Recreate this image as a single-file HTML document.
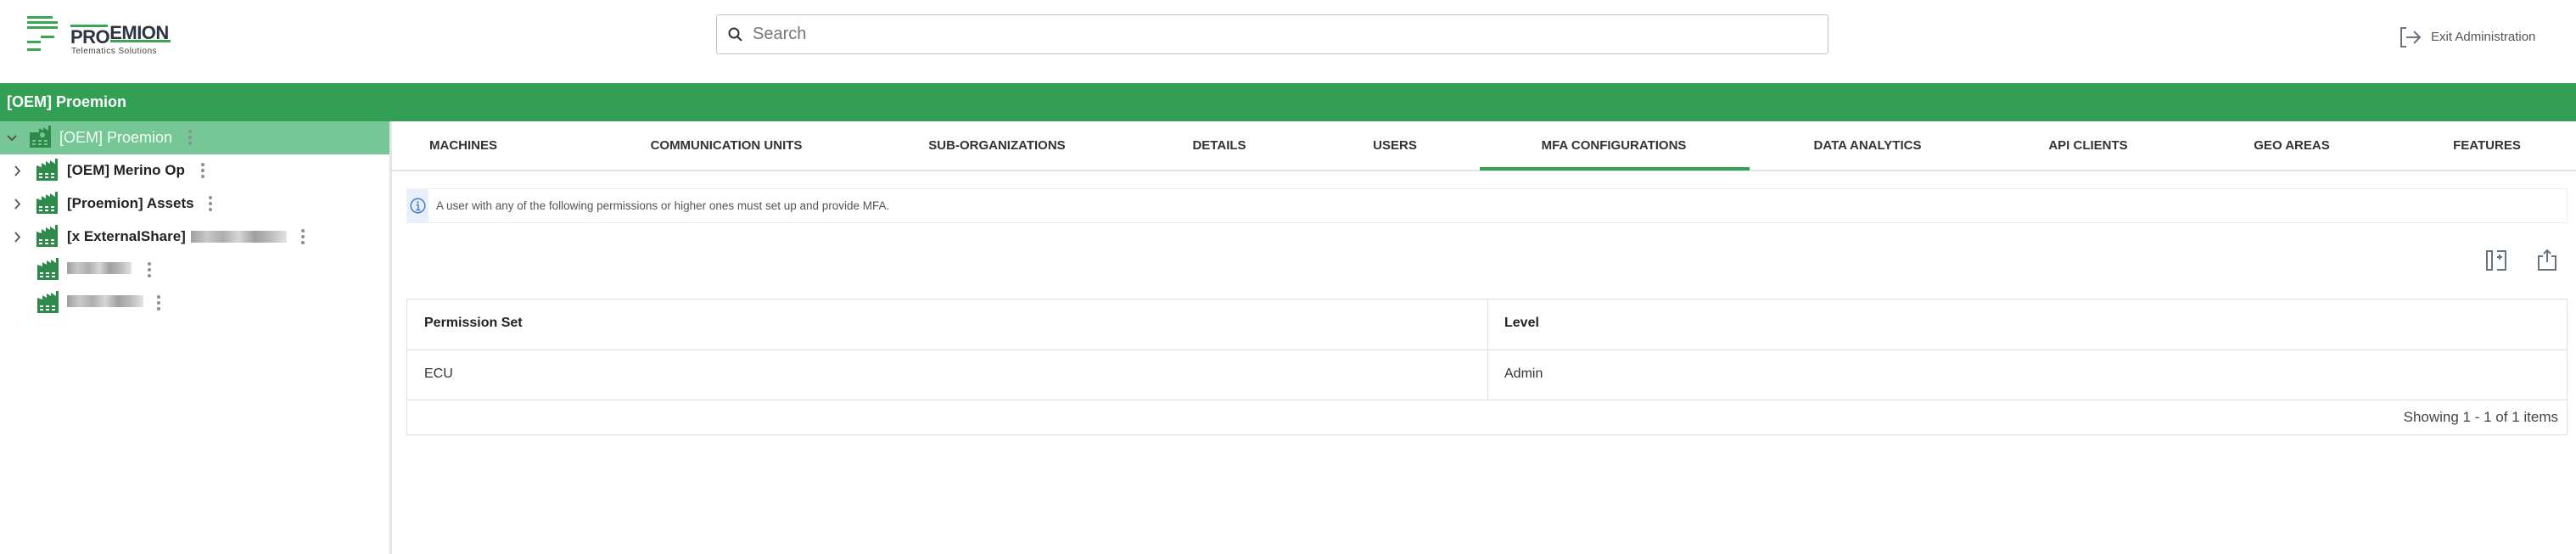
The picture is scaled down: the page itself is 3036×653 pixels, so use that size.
<!DOCTYPE html>
<html><head><meta charset="utf-8"><style>
*{margin:0;padding:0;box-sizing:border-box}
body{width:3036px;height:653px;background:#fff;font-family:"Liberation Sans",sans-serif;position:relative;overflow:hidden;color:#222}
.a{position:absolute;white-space:nowrap}
.tab{position:absolute;top:163px;font-size:15px;font-weight:bold;color:#333;transform:translateX(-50%)}
.row{position:absolute;left:0;height:39px;width:459px}
.row .t{position:absolute;left:79px;top:9px;font-size:17px;font-weight:bold;color:#222}
.dots{position:absolute;width:4px}
.dots i{display:block;width:4px;height:4px;border-radius:2px;background:#8a8f98;margin-bottom:3px}
.blur{position:absolute;height:22px;background:linear-gradient(90deg,#888,#bbb,#999,#ccc,#888,#aaa,#ddd);opacity:.8}
</style></head><body>
<!-- logo -->
<svg class="a" style="left:30px;top:18px" width="40" height="45" viewBox="0 0 40 45">
<g fill="#3aa655"><rect x="2" y="1" width="30" height="3"/><rect x="2" y="7" width="36" height="3"/><rect x="2" y="13" width="36" height="3"/><rect x="18" y="24" width="16" height="3"/><rect x="2" y="30" width="16" height="3"/><rect x="2" y="39" width="16" height="3"/></g></svg>
<div class="a" style="left:83px;top:29px;width:44px;height:3px;background:#3aa655"></div>
<div class="a" style="left:83px;top:31px;font-size:22px;font-weight:bold;color:#2d3340;letter-spacing:-0.5px">PRO<span style="position:relative;top:-5px">EMION</span></div>
<div class="a" style="left:130px;top:47px;width:71px;height:3px;background:#3aa655"></div>
<div class="a" style="left:84px;top:55px;font-size:10px;color:#444;letter-spacing:.5px">Telematics Solutions</div>
<!-- search -->
<div class="a" style="left:844px;top:17px;width:1311px;height:47px;border:1px solid #bfc3c8;border-radius:3px"></div>
<svg class="a" style="left:858px;top:32px" width="18" height="18" viewBox="0 0 18 18"><circle cx="7" cy="7" r="5.5" fill="none" stroke="#333" stroke-width="2"/><path d="M11 11l5 5" stroke="#333" stroke-width="2"/></svg>
<div class="a" style="left:887px;top:29px;font-size:20px;color:#777">Search</div>
<!-- exit -->
<svg class="a" style="left:2828px;top:32px" width="26" height="24" viewBox="0 0 26 24"><path d="M8 1H2v22h6" fill="none" stroke="#6b7280" stroke-width="2"/><path d="M8 12h16M17 5l7 7-7 7" fill="none" stroke="#6b7280" stroke-width="2"/></svg>
<div class="a" style="left:2865px;top:35px;font-size:15px;color:#555">Exit Administration</div>
<!-- green bar -->
<div class="a" style="left:0;top:98px;width:3036px;height:45px;background:#339f55"></div>
<div class="a" style="left:8px;top:110px;font-size:18px;font-weight:bold;color:#fff">[OEM] Proemion</div>
<!-- sidebar -->
<div class="a" style="left:459px;top:143px;width:3px;height:510px;background:#e6e6e6"></div>
<div class="row" style="top:143px;background:#76c795">
<svg class="a" style="left:8px;top:15px" width="12" height="10"><path d="M1 2l5 5 5-5" fill="none" stroke="#555" stroke-width="2"/></svg>
<svg class="a" style="left:35px;top:5px" width="25" height="26" viewBox="0 0 25 26"><g fill="#2d8a4a"><path d="M0 8v18h25V0h-3v6l-6-4v4l-5-3v5z"/></g><g fill="#76c795"><rect x="3" y="17" width="4" height="2"/><rect x="10" y="17" width="4" height="2"/><rect x="17" y="17" width="4" height="2"/><rect x="3" y="21" width="4" height="2"/><rect x="10" y="21" width="4" height="2"/><rect x="17" y="21" width="4" height="2"/><circle cx="15" cy="11" r="3"/></g></svg>
<div class="t" style="left:70px;color:#f4fff7;font-weight:normal;font-size:18px">[OEM] Proemion</div>
<div class="dots" style="left:222px;top:10px"><i></i><i></i><i></i></div>
</div>
<!-- tree rows -->
<div class="row" style="top:182px">
<svg class="a" style="left:17px;top:13px" width="8" height="13"><path d="M1 1l5 5.5L1 12" fill="none" stroke="#555" stroke-width="1.8"/></svg>
<svg class="a" style="left:43px;top:5px" width="25" height="26" viewBox="0 0 25 26"><path fill="#2d8a4a" d="M0 8v18h25V0h-3v6l-6-4v4l-5-3v5l-5-3v5z"/><g fill="#fff"><rect x="3" y="17" width="4" height="2"/><rect x="10" y="17" width="4" height="2"/><rect x="17" y="17" width="4" height="2"/><rect x="3" y="21" width="4" height="2"/><rect x="10" y="21" width="4" height="2"/><rect x="17" y="21" width="4" height="2"/></g></svg>
<div class="t">[OEM] Merino Op</div><div class="dots" style="left:237px;top:10px"><i></i><i></i><i></i></div></div>
<div class="row" style="top:221px">
<svg class="a" style="left:17px;top:13px" width="8" height="13"><path d="M1 1l5 5.5L1 12" fill="none" stroke="#555" stroke-width="1.8"/></svg>
<svg class="a" style="left:43px;top:5px" width="25" height="26" viewBox="0 0 25 26"><path fill="#2d8a4a" d="M0 8v18h25V0h-3v6l-6-4v4l-5-3v5l-5-3v5z"/><g fill="#fff"><rect x="3" y="17" width="4" height="2"/><rect x="10" y="17" width="4" height="2"/><rect x="17" y="17" width="4" height="2"/><rect x="3" y="21" width="4" height="2"/><rect x="10" y="21" width="4" height="2"/><rect x="17" y="21" width="4" height="2"/></g></svg>
<div class="t">[Proemion] Assets</div><div class="dots" style="left:246px;top:10px"><i></i><i></i><i></i></div></div>
<div class="row" style="top:260px">
<svg class="a" style="left:17px;top:13px" width="8" height="13"><path d="M1 1l5 5.5L1 12" fill="none" stroke="#555" stroke-width="1.8"/></svg>
<svg class="a" style="left:43px;top:5px" width="25" height="26" viewBox="0 0 25 26"><path fill="#2d8a4a" d="M0 8v18h25V0h-3v6l-6-4v4l-5-3v5l-5-3v5z"/><g fill="#fff"><rect x="3" y="17" width="4" height="2"/><rect x="10" y="17" width="4" height="2"/><rect x="17" y="17" width="4" height="2"/><rect x="3" y="21" width="4" height="2"/><rect x="10" y="21" width="4" height="2"/><rect x="17" y="21" width="4" height="2"/></g></svg>
<div class="t">[x ExternalShare]</div><div class="blur" style="left:225px;top:12px;width:113px;height:14px"></div><div class="dots" style="left:355px;top:10px"><i></i><i></i><i></i></div></div>
<div class="row" style="top:299px">
<svg class="a" style="left:44px;top:5px" width="25" height="26" viewBox="0 0 25 26"><path fill="#2d8a4a" d="M0 8v18h25V0h-3v6l-6-4v4l-5-3v5l-5-3v5z"/><g fill="#fff"><rect x="3" y="17" width="4" height="2"/><rect x="10" y="17" width="4" height="2"/><rect x="17" y="17" width="4" height="2"/><rect x="3" y="21" width="4" height="2"/><rect x="10" y="21" width="4" height="2"/><rect x="17" y="21" width="4" height="2"/></g></svg>
<div class="blur" style="left:79px;top:10px;width:76px;height:14px"></div><div class="dots" style="left:174px;top:10px"><i></i><i></i><i></i></div></div>
<div class="row" style="top:338px">
<svg class="a" style="left:44px;top:5px" width="25" height="26" viewBox="0 0 25 26"><path fill="#2d8a4a" d="M0 8v18h25V0h-3v6l-6-4v4l-5-3v5l-5-3v5z"/><g fill="#fff"><rect x="3" y="17" width="4" height="2"/><rect x="10" y="17" width="4" height="2"/><rect x="17" y="17" width="4" height="2"/><rect x="3" y="21" width="4" height="2"/><rect x="10" y="21" width="4" height="2"/><rect x="17" y="21" width="4" height="2"/></g></svg>
<div class="blur" style="left:79px;top:10px;width:90px;height:14px"></div><div class="dots" style="left:185px;top:10px"><i></i><i></i><i></i></div></div>
<!-- tabs -->
<div class="a" style="left:462px;top:200px;width:2574px;height:2px;background:#e4e4e4"></div>
<div class="tab" style="left:546px">MACHINES</div>
<div class="tab" style="left:856px">COMMUNICATION UNITS</div>
<div class="tab" style="left:1175px">SUB-ORGANIZATIONS</div>
<div class="tab" style="left:1437px">DETAILS</div>
<div class="tab" style="left:1644px">USERS</div>
<div class="tab" style="left:1902px">MFA CONFIGURATIONS</div>
<div class="a" style="left:1744px;top:197px;width:318px;height:4px;background:#339f55"></div>
<div class="tab" style="left:2201px">DATA ANALYTICS</div>
<div class="tab" style="left:2461px">API CLIENTS</div>
<div class="tab" style="left:2701px">GEO AREAS</div>
<div class="tab" style="left:2931px">FEATURES</div>
<!-- info -->
<div class="a" style="left:479px;top:222px;width:2547px;height:41px;border:1px solid #eceeef;border-radius:2px"></div>
<div class="a" style="left:479px;top:222px;width:26px;height:41px;background:#e8f0fb"></div>
<svg class="a" style="left:483px;top:233px" width="19" height="19" viewBox="0 0 19 19"><circle cx="9.5" cy="9.5" r="8.3" fill="none" stroke="#4a7fd6" stroke-width="1.6"/><circle cx="9.5" cy="5.5" r="1.2" fill="#4a7fd6"/><path d="M7.5 8.5h2.5v6M7.5 14.5h5" fill="none" stroke="#4a7fd6" stroke-width="1.6"/></svg>
<div class="a" style="left:514px;top:235px;font-size:13.5px;color:#555">A user with any of the following permissions or higher ones must set up and provide MFA.</div>
<!-- toolbar icons -->
<svg class="a" style="left:2929px;top:294px" width="27" height="27" viewBox="0 0 27 27"><path d="M2 2h6v22H2z M14 2h10v22H14" fill="none" stroke="#6b7280" stroke-width="2" stroke-dasharray="none"/><path d="M14 9h6M17 6v6" stroke="#6b7280" stroke-width="2"/></svg>
<svg class="a" style="left:2990px;top:294px" width="24" height="26" viewBox="0 0 24 26"><path d="M7 8H2v16h20V8h-5" fill="none" stroke="#6b7280" stroke-width="2"/><path d="M12 1v14M8 5l4-4 4 4" fill="none" stroke="#6b7280" stroke-width="2"/></svg>
<!-- table -->
<div class="a" style="left:479px;top:352px;width:2547px;height:161px;border:1px solid #dcdfe2"></div>
<div class="a" style="left:480px;top:412px;width:2545px;height:1px;background:#dcdfe2"></div>
<div class="a" style="left:480px;top:471px;width:2545px;height:1px;background:#dcdfe2"></div>
<div class="a" style="left:1753px;top:353px;width:1px;height:118px;background:#dcdfe2"></div>
<div class="a" style="left:500px;top:372px;font-size:16px;font-weight:bold;color:#222">Permission Set</div>
<div class="a" style="left:1773px;top:372px;font-size:16px;font-weight:bold;color:#222">Level</div>
<div class="a" style="left:500px;top:432px;font-size:16px;color:#333">ECU</div>
<div class="a" style="left:1773px;top:432px;font-size:16px;color:#333">Admin</div>
<div class="a" style="right:21px;top:482px;font-size:17px;color:#444">Showing 1 - 1 of 1 items</div>
</body></html>
